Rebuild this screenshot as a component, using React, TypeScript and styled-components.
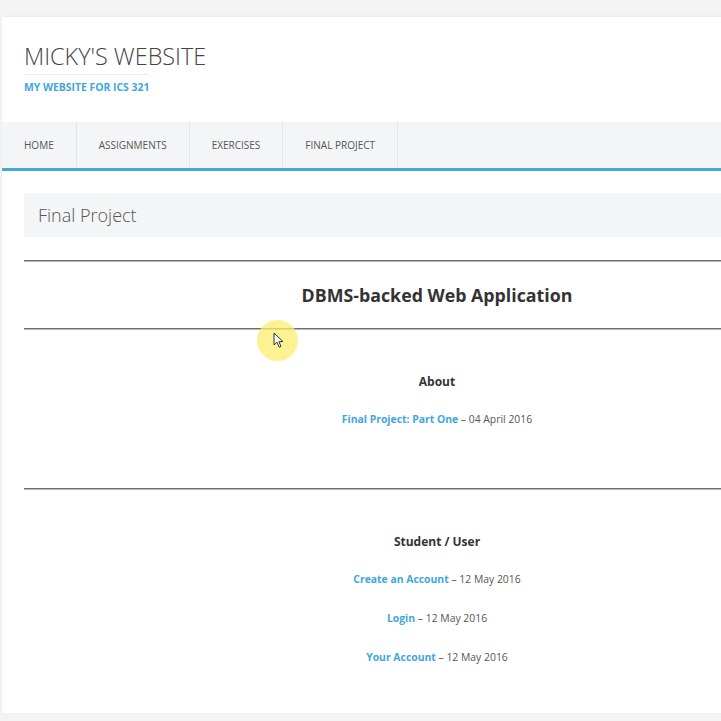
import React from "react";
import styled, { createGlobalStyle } from "styled-components";

const GlobalStyle = createGlobalStyle`
  html, body {
    margin: 0;
    padding: 0;
    width: 721px;
    height: 721px;
    overflow: hidden;
    background: #f3f3f4;
  }
  body {
    font-family: "Open Sans", "DejaVu Sans", sans-serif;
    color: #555;
  }
  * { box-sizing: border-box; }
`;

const Page = styled.div`
  position: relative;
  width: 721px;
  height: 721px;
  padding: 17px 0 0 2px;
  background: #f3f3f4;
  overflow: hidden;
`;

const Card = styled.div`
  width: 900px;
  height: 696px;
  background: #fff;
  box-shadow: 0 -1px 3px rgba(0, 0, 0, 0.04);
  display: flex;
  flex-direction: column;
`;

const Header = styled.header`
  padding: 27px 22px 29px;
  display: flex;
  flex-direction: column;
  align-items: flex-start;
`;

const SiteTitle = styled.h1`
  margin: 0;
  font-size: 23.4px;
  line-height: 24px;
  font-weight: 300;
  color: #444;
`;

const TitleRule = styled.div`
  width: 124px;
  height: 1px;
  margin-top: 6px;
  background: #ebebeb;
`;

const Tagline = styled.div`
  margin-top: 7px;
  font-size: 10.4px;
  line-height: 11px;
  font-weight: 700;
  color: #3fa6de;
`;

const Nav = styled.nav`
  display: flex;
  height: 49px;
  background: #f4f5f6;
  border-bottom: 3px solid #44a8dc;
`;

const NavItem = styled.a`
  display: flex;
  align-items: center;
  padding: 0 22px 0 22px;
  font-size: 10px;
  text-transform: uppercase;
  color: #555;
  text-decoration: none;
  border-right: 1px solid #e6e6e6;
  white-space: nowrap;
`;

const Main = styled.main`
  width: 870px;
  padding: 22px 0 0 22px;
  display: flex;
  flex-direction: column;
`;

const Content = styled.div`
  width: 826px;
  display: flex;
  flex-direction: column;
`;

const PageTitle = styled.div`
  height: 44px;
  display: flex;
  align-items: center;
  padding-left: 14px;
  background: #f4f5f6;
  font-size: 18px;
  font-weight: 300;
  color: #555;
`;

const Rule = styled.hr<{ $top?: number }>`
  margin: ${(p) => p.$top ?? 0}px 0 0;
  height: 0;
  border: none;
  border-top: 1px solid #6f6f6f;
  border-bottom: 1px solid #b8b8b8;
`;

const AppTitle = styled.h2`
  margin: 0;
  height: 66px;
  line-height: 66px;
  text-align: center;
  font-size: 17.8px;
  font-weight: 700;
  color: #333;
`;

const Section = styled.section<{ $bottom: number }>`
  padding: 42px 0 ${(p) => p.$bottom}px;
  display: flex;
  flex-direction: column;
  align-items: center;
`;

const SectionHeading = styled.h3`
  margin: 0 0 17px;
  font-size: 12px;
  line-height: 20px;
  font-weight: 700;
  color: #333;
`;

const EntryList = styled.div`
  display: flex;
  flex-direction: column;
  align-items: center;
  gap: 19px;
`;

const Entry = styled.div`
  font-size: 10.4px;
  line-height: 20px;
  color: #555;
`;

const EntryLink = styled.a`
  color: #3fa6de;
  font-weight: 700;
  text-decoration: none;
`;

const CursorHalo = styled.div`
  position: absolute;
  left: 257px;
  top: 320px;
  width: 41px;
  height: 41px;
  border-radius: 50%;
  background: rgba(252, 238, 110, 0.75);
`;

const CursorIcon = styled.svg`
  position: absolute;
  left: 273px;
  top: 332px;
`;

const navItems = ["Home", "Assignments", "Exercises", "Final Project"];

type EntryData = { title: string; date: string };

const sections: { heading: string; entries: EntryData[]; bottom: number }[] = [
  {
    heading: "About",
    entries: [{ title: "Final Project: Part One", date: "04 April 2016" }],
    bottom: 59,
  },
  {
    heading: "Student / User",
    entries: [
      { title: "Create an Account", date: "12 May 2016" },
      { title: "Login", date: "12 May 2016" },
      { title: "Your Account", date: "12 May 2016" },
    ],
    bottom: 46,
  },
];

export default function App() {
  return (
    <>
      <GlobalStyle />
      <Page>
        <Card>
          <Header>
            <SiteTitle>MICKY'S WEBSITE</SiteTitle>
            <TitleRule />
            <Tagline>MY WEBSITE FOR ICS 321</Tagline>
          </Header>
          <Nav>
            {navItems.map((n) => (
              <NavItem key={n} href="#">
                {n}
              </NavItem>
            ))}
          </Nav>
          <Main>
            <Content>
              <PageTitle>Final Project</PageTitle>
              <Rule $top={23} />
              <AppTitle>DBMS-backed Web Application</AppTitle>
              <Rule />
              {sections.map((s, i) => (
                <React.Fragment key={s.heading}>
                  {i > 0 && <Rule />}
                  <Section $bottom={s.bottom}>
                    <SectionHeading>{s.heading}</SectionHeading>
                    <EntryList>
                      {s.entries.map((e) => (
                        <Entry key={e.title}>
                          <EntryLink href="#">{e.title}</EntryLink> – {e.date}
                        </Entry>
                      ))}
                    </EntryList>
                  </Section>
                </React.Fragment>
              ))}
            </Content>
          </Main>
        </Card>
        <CursorHalo />
        <CursorIcon width="12" height="17" viewBox="0 0 12 17">
          <path
            d="M1 1 L1 13 L4 10.2 L6.2 15.2 L8 14.4 L5.9 9.6 L10 9.6 Z"
            fill="#fff"
            stroke="#333"
            strokeWidth="1"
            strokeLinejoin="round"
          />
        </CursorIcon>
      </Page>
    </>
  );
}
